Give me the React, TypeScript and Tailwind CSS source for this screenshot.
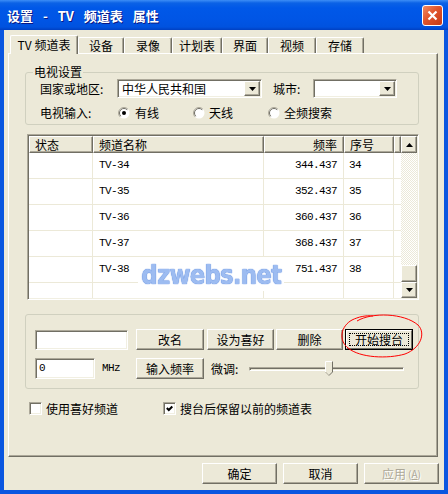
import React from "react";

const raised =
  "bg-[#ece9d8] border border-t-white border-l-white border-r-[#716f64] border-b-[#716f64] shadow-[inset_-1px_-1px_0_#aca899]";
const sunken =
  "bg-white border border-t-[#aca899] border-l-[#aca899] border-r-white border-b-white shadow-[inset_1px_1px_0_#716f64,inset_-1px_-1px_0_#f1efe2]";
const mono = "font-['Liberation_Mono','Noto_Sans_CJK_SC',monospace] text-[11px] tracking-[-0.6px]";

const rows = [
  ["TV-34", "344.437", "34"],
  ["TV-35", "352.437", "35"],
  ["TV-36", "360.437", "36"],
  ["TV-37", "368.437", "37"],
  ["TV-38", "751.437", "38"],
];

const tabs = [
  { label: "设备", w: "w-[46px]" },
  { label: "录像", w: "w-[48px]" },
  { label: "计划表", w: "w-[50px]" },
  { label: "界面", w: "w-[46px]" },
  { label: "视频", w: "w-[48px]" },
  { label: "存储", w: "w-[48px]" },
];

function Tri({ up }: { up?: boolean }) {
  return (
    <svg width="7" height="4" viewBox="0 0 7 4">
      <polygon points={up ? "3.5,0 7,4 0,4" : "0,0 7,0 3.5,4"} fill="#000" />
    </svg>
  );
}

function Btn({ w, children, disabled }: { w: string; children: React.ReactNode; disabled?: boolean }) {
  return (
    <div
      className={`${w} h-[21px] shrink-0 ${raised} flex items-center justify-center leading-none ${
        disabled ? "text-[#aca899] [text-shadow:1px_1px_0_#fff]" : "text-black"
      }`}
    >
      {children}
    </div>
  );
}

function Combo({ w, value }: { w: string; value?: string }) {
  return (
    <div className={`${w} h-[19px] shrink-0 ${sunken} p-[1px] flex`}>
      <div className="flex-1 pl-[3px] flex items-center leading-none">{value}</div>
      <div className={`w-[16px] h-[15px] ${raised} flex items-center justify-center`}>
        <Tri />
      </div>
    </div>
  );
}

function Radio({ on }: { on?: boolean }) {
  return (
    <svg width="12" height="12" viewBox="0 0 12 12" className="shrink-0">
      <circle cx="6" cy="6" r="5.5" fill="#fff" />
      <path d="M2.1 9.9A5.5 5.5 0 0 1 9.9 2.1" fill="none" stroke="#aca899" />
      <path d="M2.8 9.2A4.5 4.5 0 0 1 9.2 2.8" fill="none" stroke="#716f64" />
      {on && <circle cx="6" cy="6" r="2" fill="#000" />}
    </svg>
  );
}

function Check({ on }: { on?: boolean }) {
  return (
    <div className={`w-[13px] h-[13px] shrink-0 ${sunken} flex items-center justify-center`}>
      {on && (
        <svg width="7" height="7" viewBox="0 0 7 7">
          <polyline points="0.8,3 2.8,5 6.3,1.5" fill="none" stroke="#000" strokeWidth="2" />
        </svg>
      )}
    </div>
  );
}

function Group({ w, h, label, children, pad }: { w: string; h: string; label?: string; children: React.ReactNode; pad: string }) {
  return (
    <div className={`relative ${w} ${h} shrink-0 border border-[#d0d0bf] rounded-[3px] ${pad}`}>
      {label && (
        <span className="absolute -top-[9px] left-[7px] px-[1px] bg-[#ece9d8] leading-[16px]">{label}</span>
      )}
      {children}
    </div>
  );
}

const cell = "border-r border-[#ece9d8] h-full flex items-center";

export default function App() {
  return (
    <div className="relative w-[448px] h-[494px] bg-[#0a56e0] flex flex-col font-['Noto_Sans_CJK_SC',sans-serif] text-[12px] text-black overflow-hidden">
      {/* title bar */}
      <div className="h-[30px] shrink-0 flex items-center justify-between pl-[7px] pr-[5px] bg-[linear-gradient(to_bottom,#3d8ef6_0px,#0b62e6_3px,#0058e8_8px,#0055e5_20px,#0052df_27px,#0040c2_30px)]">
        <span className="text-white font-bold text-[13px] leading-none [word-spacing:7px] [text-shadow:1px_1px_0_#0a1883]">
          设置 - TV 频道表 属性
        </span>
        <div className="w-[21px] h-[21px] rounded-[3px] border border-white bg-[linear-gradient(135deg,#f08a63,#e0542b_45%,#c63a16)] flex items-center justify-center">
          <svg width="11" height="11" viewBox="0 0 11 11">
            <path d="M1.5 1.5l8 8M9.5 1.5l-8 8" stroke="#fff" strokeWidth="2.2" />
          </svg>
        </div>
      </div>

      {/* body */}
      <div className="flex-1 mx-[4px] mb-[4px] bg-[#ece9d8] px-[4px] pt-[5px] flex flex-col">
        <div className="flex h-[18px] pl-[2px] items-start">
          <div className="relative z-10 h-[19px] w-[68px] shrink-0 bg-[#ece9d8] border-t border-l border-r border-t-white border-l-white border-r-[#716f64] rounded-t-[2px] shadow-[inset_-1px_0_0_#aca899] flex items-center justify-center pb-[1px] leading-none">
            TV 频道表
          </div>
          {tabs.map((t) => (
            <div
              key={t.label}
              className={`${t.w} mt-[2px] h-[16px] shrink-0 border-t border-l border-r border-t-white border-l-white border-r-[#716f64] rounded-t-[2px] shadow-[inset_-1px_0_0_#aca899] flex items-center justify-center pt-[1px] leading-none`}
            >
              {t.label}
            </div>
          ))}
        </div>

        <div className={`w-[430px] h-[404px] shrink-0 ${raised} pl-[16px] pt-[18px] flex flex-col`}>
          <Group w="w-[394px]" h="h-[53px]" label="电视设置" pad="pl-[14px] pt-[6px]">
            <div className="flex items-center h-[19px]">
              <span className="w-[77px] shrink-0 leading-none">国家或地区:</span>
              <Combo w="w-[145px]" value="中华人民共和国" />
              <span className="ml-[11px] w-[40px] shrink-0 leading-none">城市:</span>
              <Combo w="w-[84px]" />
            </div>
            <div className="flex items-center h-[16px] mt-[7px]">
              <span className="w-[78px] shrink-0 leading-none">电视输入:</span>
              <div className="w-[75px] flex items-center">
                <Radio on />
                <span className="ml-[5px] leading-none">有线</span>
              </div>
              <div className="w-[75px] flex items-center">
                <Radio />
                <span className="ml-[4px] leading-none">天线</span>
              </div>
              <div className="flex items-center">
                <Radio />
                <span className="ml-[4px] leading-none">全频搜索</span>
              </div>
            </div>
          </Group>

          {/* channel list */}
          <div className="mt-[9px] ml-[2px] w-[392px] h-[166px] shrink-0 border border-t-[#aca899] border-l-[#aca899] border-r-white border-b-white shadow-[inset_1px_1px_0_#716f64,inset_-1px_-1px_0_#f1efe2] p-[1px] bg-white flex">
            <div className="w-[372px] flex flex-col">
              <div className="flex h-[17px] shrink-0 leading-none">
                <div className={`w-[64px] ${raised} flex items-center pl-[5px]`}>状态</div>
                <div className={`w-[171px] ${raised} flex items-center pl-[5px]`}>频道名称</div>
                <div className={`w-[80px] ${raised} flex items-center justify-end pr-[6px]`}>频率</div>
                <div className={`w-[50px] ${raised} flex items-center pl-[5px]`}>序号</div>
                <div className={`w-[7px] ${raised}`} />
              </div>
              {rows.map((r) => (
                <div key={r[0]} className={`flex h-[26px] shrink-0 border-b border-[#ece9d8] ${mono}`}>
                  <div className={`w-[64px] ${cell}`} />
                  <div className={`w-[171px] ${cell} pl-[6px]`}>{r[0]}</div>
                  <div className={`w-[80px] ${cell} justify-end pr-[6px]`}>{r[1]}</div>
                  <div className={`w-[50px] ${cell} pl-[5px]`}>{r[2]}</div>
                </div>
              ))}
              <div className="flex flex-1">
                <div className={`w-[64px] ${cell}`} />
                <div className={`w-[171px] ${cell}`} />
                <div className={`w-[80px] ${cell}`} />
                <div className={`w-[50px] ${cell}`} />
              </div>
            </div>
            <div className="w-[16px] flex flex-col">
              <div className={`h-[17px] shrink-0 ${raised} flex items-center justify-center`}>
                <Tri up />
              </div>
              <div className="flex-1 bg-[repeating-conic-gradient(#fff_0_25%,#ece9d8_0_50%)] bg-[length:2px_2px] flex flex-col">
                <div className={`mt-[112px] h-[17px] ${raised}`} />
              </div>
              <div className={`h-[16px] shrink-0 ${raised} flex items-center justify-center`}>
                <Tri />
              </div>
            </div>
          </div>

          <div className="mt-[14px]">
            <Group w="w-[394px]" h="h-[75px]" pad="pl-[9px] pt-[14px]">
              <div className="flex items-center h-[21px]">
                <div className={`w-[93px] h-[20px] shrink-0 ${sunken}`} />
                <div className="ml-[8px]">
                  <Btn w="w-[68px]">改名</Btn>
                </div>
                <div className="ml-[3px]">
                  <Btn w="w-[67px]">设为喜好</Btn>
                </div>
                <div className="ml-[2px]">
                  <Btn w="w-[67px]">删除</Btn>
                </div>
                <div className="ml-[2px] w-[68px] h-[21px] border border-black">
                  <div className="w-full h-full bg-[#ece9d8] border border-t-white border-l-white border-r-[#716f64] border-b-[#716f64] p-[2px]">
                    <div className="w-full h-full border border-dotted border-black flex items-center justify-center leading-none">
                      开始搜台
                    </div>
                  </div>
                </div>
              </div>
              <div className="flex items-center h-[21px] mt-[8px]">
                <div className={`w-[60px] h-[21px] shrink-0 ${sunken} pl-[3px] flex items-center ${mono}`}>0</div>
                <span className={`ml-[7px] w-[34px] shrink-0 ${mono}`}>MHz</span>
                <Btn w="w-[68px]">输入频率</Btn>
                <span className="ml-[7px] w-[38px] shrink-0 leading-none">微调:</span>
                <div className="relative w-[155px] h-[16px] flex items-center">
                  <div className="w-full h-[4px] border border-t-[#aca899] border-l-[#aca899] border-b-white border-r-white shadow-[inset_1px_1px_0_#716f64]" />
                  <svg width="8" height="15" viewBox="0 0 8 15" className="absolute left-[76px] top-0">
                    <polygon points="0.5,0.5 7.5,0.5 7.5,11 4,14.5 0.5,11" fill="#ece9d8" />
                    <polyline points="0.5,11 0.5,0.5 7.5,0.5" fill="none" stroke="#fff" />
                    <polyline points="7.5,0.5 7.5,11 4,14.5" fill="none" stroke="#716f64" />
                    <polyline points="4,14.5 0.5,11" fill="none" stroke="#aca899" />
                  </svg>
                </div>
              </div>
            </Group>
          </div>

          <div className="mt-[13px] pl-[4px] flex items-center h-[13px]">
            <div className="w-[134px] flex items-center">
              <Check />
              <span className="ml-[4px] leading-none">使用喜好频道</span>
            </div>
            <Check on />
            <span className="ml-[4px] leading-none">搜台后保留以前的频道表</span>
          </div>
        </div>

        <div className="mt-[6px] flex justify-end gap-[6px] pr-[1px]">
          <Btn w="w-[75px]">确定</Btn>
          <Btn w="w-[75px]">取消</Btn>
          <Btn w="w-[75px]" disabled>
            应用<span className="text-[10px] ml-[2px]">(<u>A</u>)</span>
          </Btn>
        </div>
      </div>

      {/* watermark */}
      <div className="absolute left-[138px] top-[257px] w-[146px] h-[34px] bg-white flex items-center justify-center">
        <span className="font-['DejaVu_Sans',sans-serif] font-bold text-[27px] leading-none tracking-[-1px] scale-x-[0.85] text-[#9dbcf1] [text-shadow:0_0_1px_#5f8ddf,0_0_1px_#5f8ddf]">
          dzwebs.net
        </span>
      </div>

      {/* hand-drawn red circle */}
      <svg className="absolute left-0 top-0 pointer-events-none" width="448" height="494" viewBox="0 0 448 494">
        <path
          d="M357 321 C372 312 404 313 418 325 C426 333 421 348 405 354 C388 359 360 358 348 348 C338 340 341 326 352 320 C358 317 366 315 373 316"
          fill="none"
          stroke="#ff0000"
          strokeWidth="1"
        />
      </svg>
    </div>
  );
}
